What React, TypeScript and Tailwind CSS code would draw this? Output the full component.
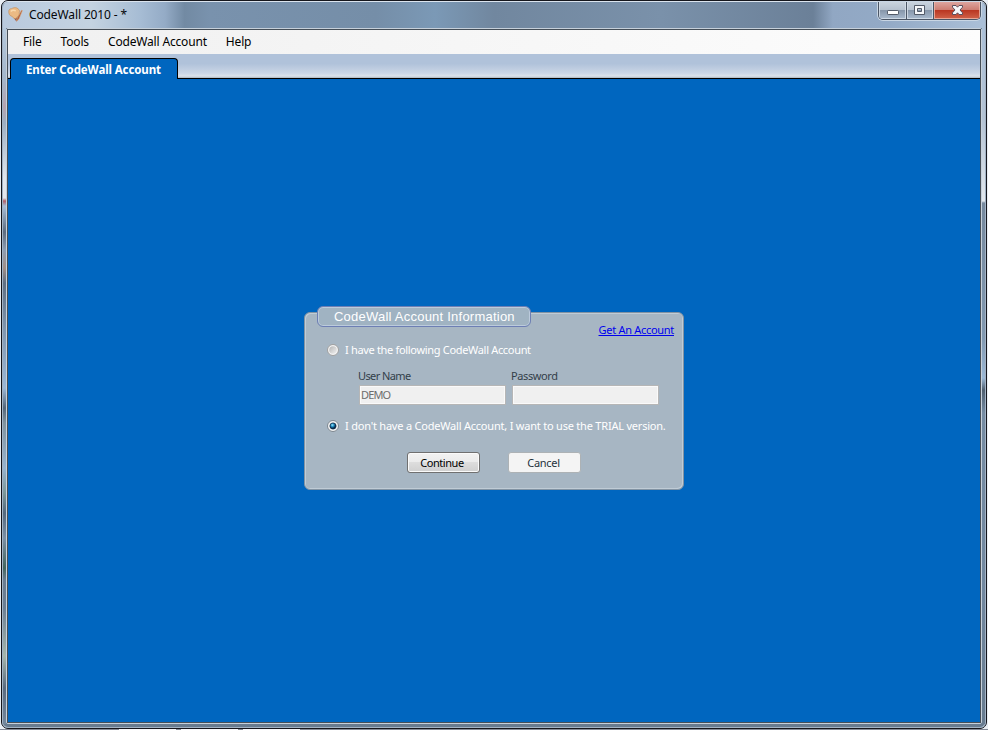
import React from "react";

function LogoIcon() {
  return (
    <svg width="16" height="16" viewBox="0 0 16 16" className="shrink-0">
      <path d="M5.500 10.500l3.500-.8 1.600 2.300-2.200 2.600z" fill="#8f5348" />
      <path d="M8.300 13.800l1.200-3.600L13.600 3l.9.6-3.300 8-2.400 2.600z" fill="#b5643a" stroke="#dcb595" strokeWidth=".5" />
      <path d="M.9 3.400C1.500 1.300 3.300 2 4.600 1.200 6.400.2 9 .5 10.200 2c1.300.8 1.700 2.300 1 3.700.4 1.700-.5 3.200-1.900 4-.5 1.500-1.500 2.200-2.700 1.900-1.200-.4-1.700-1.600-2.600-2.200C1.600 8.900.2 6.200.9 3.400z" fill="#ebba84" stroke="#c08a58" strokeWidth=".6" />
      <path d="M2.800 4.500c1.200-1.400 3.400-1.400 5-.7" fill="none" stroke="#f8d9ae" strokeWidth="1.300" />
    </svg>
  );
}

function WindowButtons() {
  return (
    <div className="flex h-[18px] w-[103px] overflow-hidden rounded-b-[5px] border border-t-0 border-[#4b5666] shadow-[0_0_0_1px_#c9d6e4]">
      <div className="w-[28px] border-r border-[#4b5666] bg-[linear-gradient(#c9d3de,#b4c0ce_48%,#8797ab_50%,#a9bace)]">
        <div className="h-full border border-t-0 border-[#d7e0ea]/80">
          <svg width="26" height="16" viewBox="0 0 26 16" className="max-w-none"><rect x="7.500" y="8.500" width="11" height="4" rx=".7" fill="#fff" stroke="#525a68" /></svg>
        </div>
      </div>
      <div className="w-[27px] border-r border-[#4b5666] bg-[linear-gradient(#c9d3de,#b4c0ce_48%,#8797ab_50%,#a9bace)]">
        <div className="h-full border border-t-0 border-[#d7e0ea]/80">
          <svg width="24" height="16" viewBox="0 0 24 16" className="max-w-none"><path fillRule="evenodd" d="M6.500 3.500h10v9h-10zM9.500 6.500v3h4v-3z" fill="#f5f7fa" stroke="#525a68" /></svg>
        </div>
      </div>
      <div className="w-[46px] bg-[linear-gradient(#dda59f,#cc7b70_48%,#ba3722_50%,#d0634a)]">
        <div className="h-full border border-t-0 border-[#efb6a8]/80">
          <svg width="44" height="16" viewBox="0 0 44 16" className="max-w-none"><path d="M17.500 3.500h3.500l1.500 1.700L24 3.500h3.500v1.700L25 8l2.500 2.800v1.700H24l-1.500-1.700-1.500 1.700h-3.500v-1.700L20 8l-2.500-2.800z" fill="#f6f7fa" stroke="#5b4e5c" /></svg>
        </div>
      </div>
    </div>
  );
}

function Radio({ checked }: { checked?: boolean }) {
  return (
    <svg width="12" height="12" viewBox="0 0 12 12" className="shrink-0">
      <defs>
        <radialGradient id="dot" cx=".4" cy=".35"><stop offset="0" stopColor="#9fe6fb" /><stop offset=".5" stopColor="#2292c8" /><stop offset="1" stopColor="#0b2d4d" /></radialGradient>
        <linearGradient id="off" x2="1" y2="1"><stop stopColor="#b4b4b4" /><stop offset="1" stopColor="#f2f2f2" /></linearGradient>
      </defs>
      <circle cx="6" cy="6" r="5.500" fill="#f4f4f4" stroke={checked ? "#7d8790" : "#9f9f9f"} />
      {checked ? <circle cx="6" cy="6" r="3.100" fill="url(#dot)" stroke="#12304d" strokeWidth=".8" /> : <circle cx="6" cy="6" r="3.800" fill="url(#off)" />}
    </svg>
  );
}

function AccountPanel() {
  return (
    <div className="relative h-[178px] w-[380px] rounded-[6px] border border-[#8293a3] bg-[#a7b6c3] pt-[10px] font-['Noto_Sans','Open_Sans',sans-serif] text-[11px] leading-[14px] shadow-[inset_1px_1px_0_#c0ccd6,inset_-1px_-1px_0_#c0ccd6]">
      <div className="absolute -top-[7px] left-[12px] flex h-[21px] w-[214px] items-center rounded-[6px] border border-[#6d7fb4] bg-[#a0b3c2] pl-[16px] font-['Liberation_Sans',Arial,sans-serif] text-[13px] tracking-[0.230px] text-white shadow-[inset_0_0_0_1px_#bccbdc]">
        <span className="whitespace-nowrap">CodeWall Account Information</span>
      </div>
      <div className="flex justify-end pr-[9px] text-[#0000ee]">
        <span className="whitespace-nowrap tracking-[-0.290px] underline">Get An Account</span>
      </div>
      <div className="mt-[6px] flex items-center pl-[22px] text-white">
        <Radio />
        <span className="ml-[6px] whitespace-nowrap tracking-[-0.320px]">I have the following CodeWall Account</span>
      </div>
      <div className="mt-[12px] flex gap-[6px] pl-[53px] text-[#333f4a]">
        <div className="w-[147px]">
          <div className="whitespace-nowrap tracking-[-0.600px]">User Name</div>
          <div className="mt-[2px] -mr-px ml-px flex h-[20px] items-center border border-[#b6b6b6] bg-[#f0f0f0] pl-px text-[#6d6d6d] shadow-[inset_0_0_0_1px_#fafafa]">
            <span className="tracking-[-0.850px]">DEMO</span>
          </div>
        </div>
        <div className="w-[148px]">
          <div className="whitespace-nowrap tracking-[-0.400px]">Password</div>
          <div className="mt-[2px] ml-px h-[20px] border border-[#b6b6b6] bg-[#f0f0f0] shadow-[inset_0_0_0_1px_#fafafa]" />
        </div>
      </div>
      <div className="mt-[14px] flex items-center pl-[22px] text-white">
        <Radio checked />
        <span className="ml-[6px] whitespace-nowrap tracking-[-0.210px]">I don't have a CodeWall Account, I want to use the TRIAL version.</span>
      </div>
      <div className="mt-[19px] flex gap-[28px] pl-[102px]">
        <button className="flex h-[21px] w-[73px] items-center justify-center rounded-[3px] border border-[#707070] bg-[linear-gradient(#f2f2f2,#ebebeb_48%,#dddddd_50%,#cfcfcf)] pr-[3px] tracking-[-0.450px] text-black shadow-[inset_0_0_0_1px_#fafafa]"><span>Continue</span></button>
        <button className="flex h-[21px] w-[73px] items-center justify-center rounded-[3px] border border-[#adb2b5] bg-[#f4f4f4] pr-[2px] tracking-[-0.300px] text-[#26323c]"><span>Cancel</span></button>
      </div>
    </div>
  );
}

export default function App() {
  return (
    <div className="flex h-[730px] w-[988px] flex-col overflow-hidden bg-[#e9eef4] font-['Noto_Sans','Open_Sans',sans-serif]">
      <div className="mx-px h-[729px] w-[986px] shrink-0 rounded-[7px] border border-[#15161c] bg-[#687b8f]">
        <div className="flex h-full flex-col rounded-[6px] border border-[#a3b3c4] border-t-[#dbe4ee] bg-[#687b8f] pb-[3px]">
          <div className="flex h-[26px] shrink-0 items-start justify-between rounded-t-[5px] bg-[linear-gradient(90deg,#b9cade_0%,#c4d3e1_9%,#a6bcd4_14%,#94abc6_16.500%,#728aa3_18.500%,#7992ad_21%,#758ea8_38%,#7b99b6_44%,#71879f_50%,#7a91aa_67%,#6b8098_82.500%,#91a7c3_84.500%,#93aac6_90%,#abc0d8_100%)]">
            <div className="flex items-center pt-[5px] pl-[5px] text-[12px] leading-[16px] text-[#05070a]">
              <LogoIcon />
              <span className="ml-[5px] whitespace-nowrap tracking-[-0.120px]">CodeWall 2010 - *</span>
            </div>
            <div className="mr-[4px]"><WindowButtons /></div>
          </div>
          <div className="flex min-h-0 flex-1">
            <div className="w-[3px] shrink-0 bg-[linear-gradient(#b4c8dc_0px,#a4b7cb_50px,#b5a3b0_79px,#9dafc3_95px,#e0e6ed_150px,#e3e6ec_170px,#b06068_173px,#a7bdd6_178px,#5c6c80_204px,#8d9db1_222px,#a08f88_240px,#5f7084_255px,#7f95ad_300px,#9ab7d6_360px,#54677b_380px,#80939e_395px,#96b3ce_440px,#7b9799_465px,#54697e_485px,#7b90a6_510px,#44665f_540px,#6a7d92_552px,#6b7f94_580px,#a5b5ab_628px,#596b80_660px,#74879c_695px)]" />
            <div className="min-w-0 flex-1 rounded-[2px] border border-[#c6d0da]">
              <div className="flex h-full flex-col border border-[#454e57] bg-[#0066bf]">
                <div className="flex h-[24px] shrink-0 items-center gap-[19px] bg-linear-to-r from-[#f0f0f0] to-[#fdfdfd] pl-[15px] text-[12px] leading-[16px] text-black">
                  <span className="tracking-[-0.170px]">File</span>
                  <span className="tracking-[-0.150px]">Tools</span>
                  <span className="whitespace-nowrap tracking-[-0.170px]">CodeWall Account</span>
                  <span className="tracking-[-0.170px]">Help</span>
                </div>
                <div className="h-[25px] shrink-0 border-b border-black bg-[linear-gradient(#b0c2da,#b0c2da_40%,#cbd6e6_80%,#dce3eb_92%,#a9b5c2_100%)] pt-[4px] pl-[2px]">
                  <div className="flex h-[21px] w-[168px] items-center rounded-t-[4px] border border-b-0 border-black bg-[#0066bf] pt-px pl-[15px] text-[11.500px] font-bold tracking-[-0.100px] text-white">
                    <span className="whitespace-nowrap">Enter CodeWall Account</span>
                  </div>
                </div>
                <div className="flex-1 pt-[233px] pl-[296px]">
                  <AccountPanel />
                </div>
              </div>
            </div>
            <div className="w-[3px] shrink-0 bg-[linear-gradient(#abc0d8_0px,#b4c3d4_90px,#e2e8ee_173px,#76899e_175px,#8299b1_310px,#9bb8d6_350px,#4f5f70_362px,#768ca3_385px,#7288a0_560px,#687c90_695px)]" />
          </div>
        </div>
      </div>
      <div className="flex h-px shrink-0 bg-[#858a96] pl-[119px]">
        <div className="mr-[5px] w-[57px] bg-[#f7f7fa]" />
        <div className="mr-[5px] w-[57px] bg-[#f7f7fa]" />
        <div className="w-[57px] bg-[#f7f7fa]" />
      </div>
    </div>
  );
}
